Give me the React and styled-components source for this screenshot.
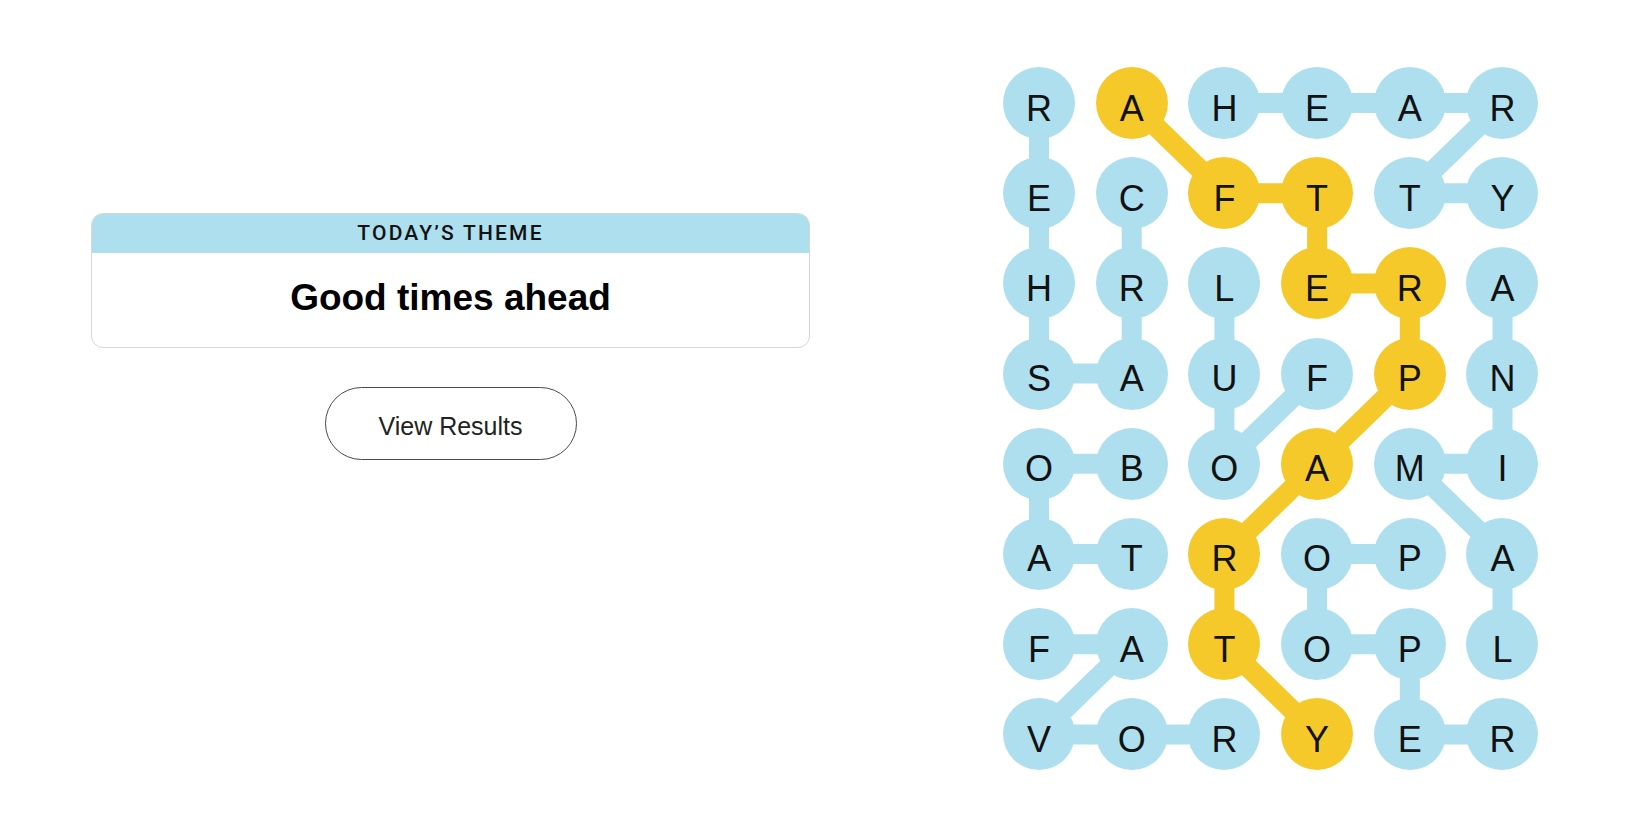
import React from 'react'
import styled, { createGlobalStyle } from 'styled-components'

const GlobalStyle = createGlobalStyle`
    body {
        margin: 0;
        background: #ffffff;
        font-family: "Liberation Sans", Arial, sans-serif;
        color: #121212;
    }
`

const BLUE = '#aedfee'
const YELLOW = '#f6c92b'
const CELL = 72
const COL_STEP = 92.7
const ROW_STEP = 90.2

const ROWS = [
    'RAHEAR',
    'ECFTTY',
    'HRLERA',
    'SAUFPN',
    'OBOAMI',
    'ATROPA',
    'FATOPL',
    'VORYER',
]

// found words as [row, col] paths
const WORDS = [
    { kind: 'theme', path: [[1, 1], [2, 1], [3, 1], [3, 0], [2, 0], [1, 0], [0, 0]] },
    { kind: 'theme', path: [[0, 2], [0, 3], [0, 4], [0, 5], [1, 4], [1, 5]] },
    { kind: 'theme', path: [[3, 3], [4, 2], [3, 2], [2, 2]] },
    { kind: 'theme', path: [[2, 5], [3, 5], [4, 5], [4, 4], [5, 5], [6, 5]] },
    { kind: 'theme', path: [[4, 1], [4, 0], [5, 0], [5, 1]] },
    { kind: 'theme', path: [[6, 0], [6, 1], [7, 0], [7, 1], [7, 2]] },
    { kind: 'theme', path: [[5, 4], [5, 3], [6, 3], [6, 4], [7, 4], [7, 5]] },
    { kind: 'spangram', path: [[0, 1], [1, 2], [1, 3], [2, 3], [2, 4], [3, 4], [4, 3], [5, 2], [6, 2], [7, 3]] },
]

const spangramCells = new Set(
    WORDS.filter(w => w.kind === 'spangram').flatMap(w => w.path.map(([r, c]) => `${r}-${c}`))
)

const Page = styled.main`
    display: flex;
    align-items: flex-start;
    padding: 67px 0 0 91px;
`

const Side = styled.section`
    width: 719px;
    margin-top: 146px;
    display: flex;
    flex-direction: column;
    align-items: center;
`

const ThemeCard = styled.div`
    width: 100%;
    box-sizing: border-box;
    border: 1px solid #d6d6d6;
    border-radius: 12px;
    overflow: hidden;
    background: #fff;
`

const ThemeLabel = styled.div`
    height: 40px;
    margin: -1px -1px 0;
    background: ${BLUE};
    display: flex;
    align-items: center;
    justify-content: center;
    font-family: Roboto, "Liberation Sans", sans-serif;
    font-weight: 500;
    font-size: 21px;
    letter-spacing: 2.2px;
    text-transform: uppercase;
    color: #121212;
`

const ThemeTitle = styled.h1`
    margin: 0;
    height: 94px;
    box-sizing: border-box;
    padding-top: 23px;
    text-align: center;
    font-size: 37px;
    line-height: 1.2;
    font-weight: 700;
    color: #000;
`

const ResultsButton = styled.button`
    margin-top: 39px;
    width: 252px;
    height: 73px;
    padding: 6px 0 0;
    border: 1px solid #4a4a4a;
    border-radius: 37px;
    background: #fff;
    font-family: "Liberation Sans", Arial, sans-serif;
    font-size: 25px;
    color: #222;
    cursor: pointer;
`

const Board = styled.div`
    position: relative;
    margin-left: 193px;
`

const Links = styled.svg`
    position: absolute;
    left: 0;
    top: 0;
    pointer-events: none;
`

const Grid = styled.div`
    position: relative;
    display: grid;
    grid-template-columns: repeat(6, ${CELL}px);
    grid-auto-rows: ${CELL}px;
    column-gap: ${COL_STEP - CELL}px;
    row-gap: ${ROW_STEP - CELL}px;
`

const Letter = styled.button`
    width: ${CELL}px;
    height: ${CELL}px;
    padding: 11px 0 0;
    border: none;
    border-radius: 50%;
    background: ${({ $spangram }) => ($spangram ? YELLOW : BLUE)};
    font-family: "Liberation Sans", Arial, sans-serif;
    font-size: 36px;
    color: #121212;
    display: flex;
    align-items: center;
    justify-content: center;
`

const center = ([r, c]) => [CELL / 2 + c * COL_STEP, CELL / 2 + r * ROW_STEP]

const App = () => {
    const width = CELL + 5 * COL_STEP
    const height = CELL + 7 * ROW_STEP
    return (
        <>
            <GlobalStyle />
            <Page>
                <Side>
                    <ThemeCard>
                        <ThemeLabel>Today’s Theme</ThemeLabel>
                        <ThemeTitle>Good times ahead</ThemeTitle>
                    </ThemeCard>
                    <ResultsButton>View Results</ResultsButton>
                </Side>
                <Board>
                    <Links width={width} height={height}>
                        {WORDS.map((w, i) => (
                            <polyline
                                key={i}
                                points={w.path.map(p => center(p).join(',')).join(' ')}
                                fill="none"
                                stroke={w.kind === 'spangram' ? YELLOW : BLUE}
                                strokeWidth="20"
                                strokeLinejoin="round"
                            />
                        ))}
                    </Links>
                    <Grid>
                        {ROWS.flatMap((row, r) =>
                            row.split('').map((ch, c) => (
                                <Letter key={`${r}-${c}`} $spangram={spangramCells.has(`${r}-${c}`)}>
                                    {ch}
                                </Letter>
                            ))
                        )}
                    </Grid>
                </Board>
            </Page>
        </>
    )
}

export default App
